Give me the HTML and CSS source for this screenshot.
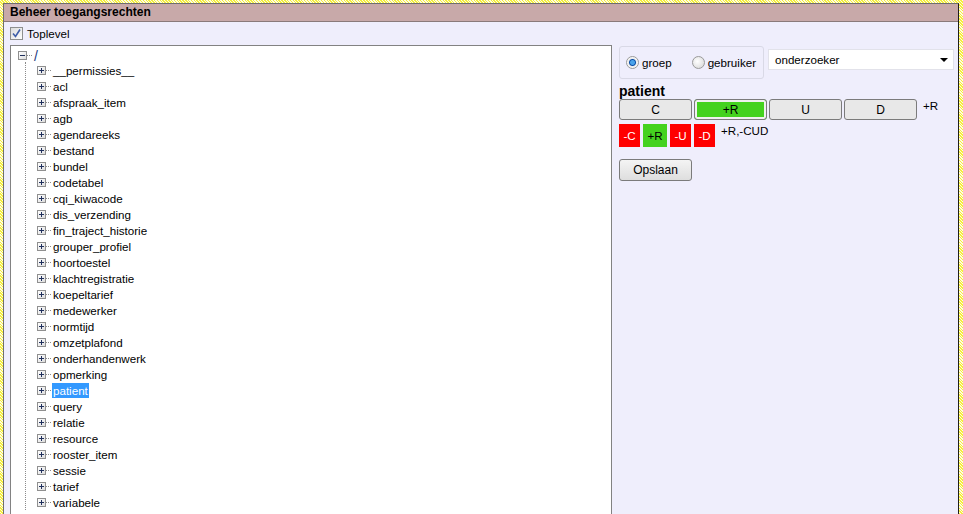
FILE: index.html
```html
<!DOCTYPE html>
<html>
<head>
    <meta charset="UTF-8">
    <title>Beheer toegangsrechten</title>
    <link rel="stylesheet" href="styles.css">
</head>
<body>
    <div class="frame">
        <div class="frame-header">Beheer toegangsrechten</div>
        <div class="frame-body">
            <label class="toplevel">
                <span class="checkbox"><svg width="9" height="9" viewBox="0 0 9 9"><path d="M1 4.5 L3.5 7.5 L8 0.5" fill="none" stroke="#3f5ea8" stroke-width="1.6"/></svg></span>
                Toplevel
            </label>
            <div class="columns">
                <div class="tree">
                    <div class="tree-root">
                        <span class="node-box minus"></span><span class="node-dots"></span><span class="root-label">/</span>
                    </div>
                    <ul class="tree-children">
                        <li><span class="node-box"></span><span class="node-dots"></span><span class="node-label">__permissies__</span></li>
                        <li><span class="node-box"></span><span class="node-dots"></span><span class="node-label">acl</span></li>
                        <li><span class="node-box"></span><span class="node-dots"></span><span class="node-label">afspraak_item</span></li>
                        <li><span class="node-box"></span><span class="node-dots"></span><span class="node-label">agb</span></li>
                        <li><span class="node-box"></span><span class="node-dots"></span><span class="node-label">agendareeks</span></li>
                        <li><span class="node-box"></span><span class="node-dots"></span><span class="node-label">bestand</span></li>
                        <li><span class="node-box"></span><span class="node-dots"></span><span class="node-label">bundel</span></li>
                        <li><span class="node-box"></span><span class="node-dots"></span><span class="node-label">codetabel</span></li>
                        <li><span class="node-box"></span><span class="node-dots"></span><span class="node-label">cqi_kiwacode</span></li>
                        <li><span class="node-box"></span><span class="node-dots"></span><span class="node-label">dis_verzending</span></li>
                        <li><span class="node-box"></span><span class="node-dots"></span><span class="node-label">fin_traject_historie</span></li>
                        <li><span class="node-box"></span><span class="node-dots"></span><span class="node-label">grouper_profiel</span></li>
                        <li><span class="node-box"></span><span class="node-dots"></span><span class="node-label">hoortoestel</span></li>
                        <li><span class="node-box"></span><span class="node-dots"></span><span class="node-label">klachtregistratie</span></li>
                        <li><span class="node-box"></span><span class="node-dots"></span><span class="node-label">koepeltarief</span></li>
                        <li><span class="node-box"></span><span class="node-dots"></span><span class="node-label">medewerker</span></li>
                        <li><span class="node-box"></span><span class="node-dots"></span><span class="node-label">normtijd</span></li>
                        <li><span class="node-box"></span><span class="node-dots"></span><span class="node-label">omzetplafond</span></li>
                        <li><span class="node-box"></span><span class="node-dots"></span><span class="node-label">onderhandenwerk</span></li>
                        <li><span class="node-box"></span><span class="node-dots"></span><span class="node-label">opmerking</span></li>
                        <li><span class="node-box"></span><span class="node-dots"></span><span class="node-label selected">patient</span></li>
                        <li><span class="node-box"></span><span class="node-dots"></span><span class="node-label">query</span></li>
                        <li><span class="node-box"></span><span class="node-dots"></span><span class="node-label">relatie</span></li>
                        <li><span class="node-box"></span><span class="node-dots"></span><span class="node-label">resource</span></li>
                        <li><span class="node-box"></span><span class="node-dots"></span><span class="node-label">rooster_item</span></li>
                        <li><span class="node-box"></span><span class="node-dots"></span><span class="node-label">sessie</span></li>
                        <li><span class="node-box"></span><span class="node-dots"></span><span class="node-label">tarief</span></li>
                        <li><span class="node-box"></span><span class="node-dots"></span><span class="node-label">variabele</span></li>
                    </ul>
                </div>

                <div class="rights">
                    <div class="target-row">
                        <div class="radio-group">
                            <label class="radio checked"><span class="radio-dot"></span>groep</label>
                            <label class="radio"><span class="radio-dot"></span>gebruiker</label>
                        </div>
                        <div class="select">
                            <span>onderzoeker</span>
                            <span class="select-arrow"></span>
                        </div>
                    </div>

                    <div class="object-name">patient</div>
                    <div class="crud-row">
                        <button class="crud-btn">C</button>
                        <button class="crud-btn on">+R</button>
                        <button class="crud-btn">U</button>
                        <button class="crud-btn">D</button>
                        <span class="crud-summary">+R</span>
                    </div>
                    <div class="flag-row">
                        <span class="flag deny">-C</span>
                        <span class="flag allow">+R</span>
                        <span class="flag deny">-U</span>
                        <span class="flag deny">-D</span>
                        <span class="flag-summary">+R,-CUD</span>
                    </div>
                    <button class="save-btn">Opslaan</button>
                </div>
            </div>
        </div>
    </div>
</body>
</html>
```

FILE: styles.css
```css
html, body {
    height: 100%;
}

body {
    margin: 0;
    padding: 3px 4px 0 3px;
    box-sizing: border-box;
    overflow: hidden;
    font-family: "Liberation Sans", Arial, sans-serif;
    font-size: 11.6px;
    color: #000;
    background: repeating-linear-gradient(45deg, #f4ef3a 0 1px, #fffbe0 1px 2px);
}

.frame {
    height: 100%;
    display: flex;
    flex-direction: column;
    background: #efeefc;
    border: 1px solid #6e6e6e;
    border-bottom: none;
    border-right-color: #1e1e1e;
}

.frame-header {
    height: 17px;
    line-height: 17px;
    padding-left: 6px;
    background: #c8a9a9;
    border-bottom: 1px solid #8a7a7a;
    font-weight: bold;
    font-size: 12px;
}

.frame-body {
    flex: 1;
    display: flex;
    flex-direction: column;
    padding: 4px 0 0 6px;
    min-height: 0;
}

.toplevel {
    display: flex;
    align-items: center;
    gap: 4px;
    height: 15px;
    margin-bottom: 4px;
}

.checkbox {
    width: 11px;
    height: 11px;
    border: 1px solid #8e8f8f;
    background: linear-gradient(135deg, #dcdcdc, #fdfdfd);
    display: flex;
    align-items: center;
    justify-content: center;
}

.columns {
    flex: 1;
    display: flex;
    gap: 7px;
    min-height: 0;
}

/* tree */

.tree {
    width: 593px;
    background: #fff;
    border: 1px solid #828282;
    border-bottom: none;
    padding: 2px 0 0 7px;
    overflow: hidden;
}

.tree-root,
.tree-children li {
    display: flex;
    align-items: center;
    height: 16px;
}

.tree-root {
    height: 15px;
}

.tree-children {
    list-style: none;
    margin: -1px 0 0 7px;
    padding: 0 0 0 11px;
    border-left: 1px dotted #8c8c8c;
}

.node-box {
    position: relative;
    width: 7px;
    height: 7px;
    border: 1px solid #8f8f8f;
    background: linear-gradient(135deg, #fff, #dcdcdc);
    flex-shrink: 0;
}

.node-box::before,
.node-box::after {
    content: "";
    position: absolute;
    background: #1f2f5c;
}

.node-box::before {
    left: 1px;
    top: 3px;
    width: 5px;
    height: 1px;
}

.node-box::after {
    left: 3px;
    top: 1px;
    width: 1px;
    height: 5px;
}

.node-box.minus::after {
    display: none;
}

.node-dots {
    width: 5px;
    border-top: 1px dotted #8c8c8c;
    margin: 0 1px 0 0;
}

.root-label {
    color: #1e3a80;
    margin-left: 1px;
    font-size: 14px;
    line-height: 14px;
}

.node-label {
    padding: 0 1px;
    line-height: 15px;
}

.node-label.selected {
    background: #3399ff;
    color: #fff;
}

/* rights panel */

.rights {
    flex: 1;
    padding-top: 1px;
}

.target-row {
    display: flex;
    align-items: flex-start;
    gap: 4px;
}

.radio-group {
    display: flex;
    align-items: center;
    justify-content: space-between;
    width: 130px;
    height: 31px;
    padding: 0 7px 0 6px;
    border: 1px solid #d9d9e6;
    border-radius: 3px;
}

.radio {
    display: flex;
    align-items: center;
    gap: 3px;
}

.radio-dot {
    width: 11px;
    height: 11px;
    border-radius: 50%;
    border: 1px solid #9a9a9a;
    background: radial-gradient(circle at 40% 40%, #fff, #d4d4d4);
}

.radio.checked .radio-dot {
    background: radial-gradient(circle, #4aa3ea 0 2px, #0a4ea8 3px, #ececec 4px, #fff 6px);
}

.select {
    flex: 0 0 186px;
    height: 21px;
    margin-top: 3px;
    display: flex;
    align-items: center;
    justify-content: space-between;
    padding: 0 5px 0 6px;
    box-sizing: border-box;
    background: #fff;
    border: 1px solid #e2e2ea;
}

.select-arrow {
    width: 0;
    height: 0;
    border-left: 4px solid transparent;
    border-right: 4px solid transparent;
    border-top: 4px solid #000;
}

.object-name {
    margin-top: 5px;
    font-weight: bold;
    font-size: 14px;
    line-height: 15px;
}

.crud-row {
    display: flex;
    align-items: flex-start;
    gap: 2px;
}

.crud-btn {
    width: 73px;
    height: 21px;
    padding: 0;
    border: 1px solid #7b7b7b;
    border-radius: 3px;
    background: #e8e8e8;
    font-family: inherit;
    font-size: 12px;
    color: #000;
}

.crud-btn.on {
    background: #44d21f;
    box-shadow: inset 0 0 0 2px #f0f0f0;
}

.crud-summary {
    margin-left: 4px;
    line-height: 14px;
}

.flag-row {
    display: flex;
    align-items: flex-start;
    gap: 3px;
    margin-top: 4px;
}

.flag {
    width: 21px;
    height: 23px;
    display: flex;
    align-items: center;
    justify-content: center;
}

.flag.deny {
    background: #ff0000;
    color: #fff;
}

.flag.allow {
    width: 24px;
    background: #44d21f;
    color: #000;
}

.flag-summary {
    margin-left: 3px;
    line-height: 14px;
}

.save-btn {
    display: block;
    margin-top: 12px;
    width: 73px;
    height: 22px;
    padding: 0;
    border: 1px solid #7b7b7b;
    border-radius: 3px;
    background: linear-gradient(#f4f4f4, #dedede);
    font-family: inherit;
    font-size: 12px;
    color: #000;
}
```
